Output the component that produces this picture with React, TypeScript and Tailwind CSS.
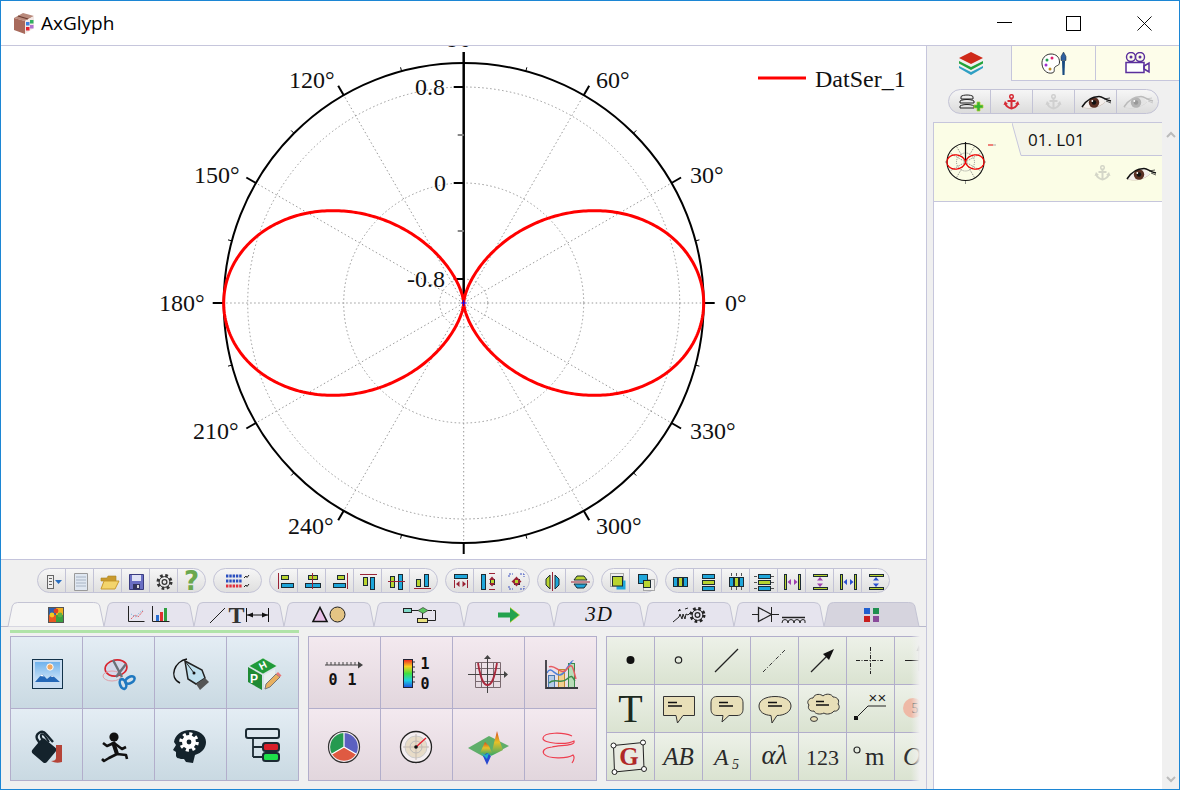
import { ReactNode } from 'react'

const CX = 463.7
const CY = 303
const R = 240

// r = 240 cos^2(t), same curve for the plot and the layer thumbnail
function lobes(cx: number, cy: number, rad: number) {
  const pts: string[] = []
  for (let i = 0; i <= 720; i++) {
    const t = (i / 720) * Math.PI * 2
    const r = rad * Math.cos(t) * Math.cos(t)
    pts.push(`${(cx + r * Math.cos(t)).toFixed(2)},${(cy - r * Math.sin(t)).toFixed(2)}`)
  }
  return 'M' + pts.join(' L') + 'Z'
}

const polar = (deg: number, r: number, cx = CX, cy = CY) => ({
  x: cx + r * Math.cos((deg * Math.PI) / 180),
  y: cy - r * Math.sin((deg * Math.PI) / 180),
})

const angleLabels = [
  { t: '120°', x: 289, y: 88 },
  { t: '60°', x: 596, y: 88 },
  { t: '150°', x: 194, y: 183 },
  { t: '30°', x: 690, y: 183 },
  { t: '180°', x: 159, y: 311 },
  { t: '0°', x: 725, y: 311 },
  { t: '210°', x: 193, y: 439 },
  { t: '330°', x: 690, y: 439 },
  { t: '240°', x: 288, y: 534 },
  { t: '300°', x: 596, y: 534 },
]

function PolarPlot() {
  const spokes = Array.from({ length: 12 }, (_, i) => i * 30)
  const minors = Array.from({ length: 12 }, (_, i) => i * 30 + 15)
  return (
    <svg width="925" height="513" viewBox="1 46 925 513" className="block" fontFamily="'Liberation Serif', serif">
      {spokes.map((a) => {
        const p = polar(a, R)
        return <line key={a} x1={CX} y1={CY} x2={p.x} y2={p.y} stroke="#999" strokeWidth="1" strokeDasharray="1.5 2.5" />
      })}
      {[24, 120, 216].map((r) => (
        <circle key={r} cx={CX} cy={CY} r={r} fill="none" stroke="#999" strokeWidth="1" strokeDasharray="1.5 2.5" />
      ))}
      <circle cx={CX} cy={CY} r={R} fill="none" stroke="#000" strokeWidth="2" />
      {spokes.filter((a) => a !== 90).map((a) => {
        const p = polar(a, R)
        const q = polar(a, R + 11)
        return <line key={a} x1={p.x} y1={p.y} x2={q.x} y2={q.y} stroke="#000" strokeWidth="2" />
      })}
      {minors.map((a) => {
        const p = polar(a, R)
        const q = polar(a, R + 4)
        return <line key={a} x1={p.x} y1={p.y} x2={q.x} y2={q.y} stroke="#000" strokeWidth="1" />
      })}
      <line x1={CX} y1={52} x2={CX} y2={CY} stroke="#000" strokeWidth="2.5" />
      {[87, 183, 279].map((y) => (
        <line key={y} x1={CX - 10} y1={y} x2={CX} y2={y} stroke="#000" strokeWidth="2" />
      ))}
      <line x1={CX - 6} y1={135} x2={CX} y2={135} stroke="#888" strokeWidth="2" />
      <line x1={CX - 6} y1={231} x2={CX} y2={231} stroke="#888" strokeWidth="2" />
      <path d={lobes(CX, CY, R)} fill="none" stroke="#f00" strokeWidth="3" />
      <path d={`M${CX - 3} ${CY}h6M${CX} ${CY - 3}v6`} stroke="#00f" strokeWidth="1" />
      <g fontSize="24" fill="#111">
        <text x="464" y="47" textAnchor="middle">90°</text>
        {angleLabels.map((l) => (
          <text key={l.t} x={l.x} y={l.y}>{l.t}</text>
        ))}
        <text x="445" y="95" textAnchor="end">0.8</text>
        <text x="446" y="191" textAnchor="end">0</text>
        <text x="445" y="287" textAnchor="end">-0.8</text>
        <text x="815" y="87">DatSer_1</text>
      </g>
      <line x1="758" y1="78" x2="806" y2="78" stroke="#f00" strokeWidth="3" />
    </svg>
  )
}

/* ---------- shared little drawings ---------- */

const LIME = '#b9d42f'
const BLUE = '#1ea6da'
const MAROON = '#9a2335'

function B({ x, y, w, h, f = LIME }: { x: number; y: number; w: number; h: number; f?: string }) {
  return <rect x={x + 0.5} y={y + 0.5} width={w} height={h} fill={f} stroke="#1c2b33" strokeWidth="1" />
}

function Ic({ children, w = 28, h = 24 }: { children: ReactNode; w?: number; h?: number }) {
  return (
    <svg width={w} height={h} viewBox={`0 0 ${w} ${h}`} className="shrink-0 overflow-visible">
      {children}
    </svg>
  )
}

function Arrows({ x, y, v, c }: { x: number; y: number; v?: boolean; c: string }) {
  return v ? (
    <path d={`M${x} ${y - 5}l-3 3.5h6zM${x} ${y + 5}l-3 -3.5h6z`} fill={c} />
  ) : (
    <path d={`M${x - 5} ${y}l3.5 -3v6zM${x + 5} ${y}l-3.5 -3v6z`} fill={c} />
  )
}

function Pill({ children }: { children: ReactNode[] }) {
  const single = children.length === 1
  return (
    <div className="flex h-[25px] rounded-full border border-[#c3c3d6] bg-linear-to-b from-[#f6f6f6] to-[#dfdfdf]">
      {children.map((c, i) => (
        <div
          key={i}
          className={
            single
              ? 'flex w-[47px] items-center justify-center'
              : i === 0
                ? 'flex w-[27px] items-center justify-center'
                : 'flex w-[28px] items-center justify-center border-l border-[#c3c3d6]'
          }
        >
          {c}
        </div>
      ))}
    </div>
  )
}

function Gear({ x, y, s = 1, c = '#333' }: { x: number; y: number; s?: number; c?: string }) {
  return (
    <g transform={`translate(${x} ${y}) scale(${s})`} fill="none" stroke={c}>
      <circle r="6.5" strokeWidth="3" strokeDasharray="2.6 2.5" />
      <circle r="5.4" strokeWidth="1" />
      <circle r="2.4" strokeWidth="1.2" />
    </g>
  )
}

/* ---------- top toolbar ---------- */

const toolbarGroups: ReactNode[][] = [
  [
    <Ic key="a">
      <rect x="9.5" y="6.5" width="6" height="13" fill="#eee" stroke="#666" />
      <path d="M11 9.5h3M11 12.5h3M11 15.5h3" stroke="#666" />
      <path d="M17 11h7l-3.5 4z" fill="#2a6fc0" />
    </Ic>,
    <Ic key="b">
      <path d="M8.5 4.5h13v17h-13z" fill="#dfe7f1" stroke="#9a9a9a" />
      <path d="M10 8h10M10 11h10M10 14h10M10 17h10" stroke="#a8b4c4" />
    </Ic>,
    <Ic key="c">
      <path d="M7 9h6l1 -2h8v5H7z" fill="#c99a2e" stroke="#a98322" strokeWidth=".6" />
      <path d="M7 20l3 -8h15l-4 8z" fill="#f3d46c" stroke="#c99a2e" />
    </Ic>,
    <Ic key="d">
      <path d="M7.5 5.5h14v15h-14z" fill="#6a6fc4" stroke="#3a3c80" />
      <rect x="10" y="6" width="9" height="6" fill="#dfe2f5" />
      <rect x="11" y="15" width="7" height="5.5" fill="#33355f" />
      <rect x="15" y="16" width="2" height="3" fill="#ddd" />
    </Ic>,
    <Ic key="e"><Gear x={14.5} y={13} /></Ic>,
    <span key="f" className="font-['DejaVu_Sans',sans-serif] text-[26px] leading-none font-bold text-[#6aa84f]">?</span>,
  ],
  [
    <Ic key="a" w={47}>
      {[0, 1, 2].map((r) =>
        [0, 1, 2, 3, 4].map((c) => (
          <rect key={`${r}${c}`} x={12 + c * 3.3} y={5.5 + r * 5} width="2.4" height="3" fill={r === 2 ? '#e0303e' : '#2a4fc0'} />
        )),
      )}
      <path d="M30 9l2 -2 1 1.500 2 -2.500M30 18l2 -2 1 1.500 2 -2.500" fill="none" stroke="#222" strokeWidth="1" />
    </Ic>,
  ],
  [
    <Ic key="a"><path d="M8.5 4v16" stroke={MAROON} /><B x={11} y={6} w={7} h={4} /><B x={11} y={14} w={12} h={4} f={BLUE} /></Ic>,
    <Ic key="b"><B x={10} y={6} w={9} h={4} /><B x={7} y={14} w={15} h={4} f={BLUE} /><path d="M14.5 4v16" stroke={MAROON} /></Ic>,
    <Ic key="c"><B x={11} y={6} w={7} h={4} /><B x={7} y={14} w={12} h={4} f={BLUE} /><path d="M21.5 4v16" stroke={MAROON} /></Ic>,
    <Ic key="d"><path d="M6 5.5h17" stroke={MAROON} /><B x={9} y={8} w={4} h={8} /><B x={16} y={8} w={4} h={12} f={BLUE} /></Ic>,
    <Ic key="e"><B x={8} y={7} w={4} h={11} /><B x={16} y={5} w={4} h={15} f={BLUE} /><path d="M6 12.5h17" stroke={MAROON} /></Ic>,
    <Ic key="f"><B x={6} y={10} w={4} h={7} /><B x={14} y={5} w={4} h={12} f={BLUE} /><path d="M4 19.5h17" stroke={MAROON} /></Ic>,
  ],
  [
    <Ic key="a"><B x={8} y={5} w={13} h={4} f={BLUE} /><path d="M8.5 11v8M21.5 11v8" stroke={MAROON} /><Arrows x={15} y={15} c={MAROON} /></Ic>,
    <Ic key="b"><B x={7} y={5} w={4} h={15} f={BLUE} /><B x={16} y={10} w={4} h={5} /><Arrows x={18} y={12.5} v c={MAROON} /><path d="M15 4.5h6M15 20.5h6" stroke={MAROON} /></Ic>,
    <Ic key="c">
      <path d="M7 8V5h4M18 5h4v3M7 17v3h4M18 20h4v-3" fill="none" stroke="#3a50c0" strokeDasharray="2 1" />
      <B x={12} y={10} w={5} h={5} />
      <Arrows x={14.5} y={12.5} c={MAROON} />
      <Arrows x={14.5} y={12.5} v c={MAROON} />
    </Ic>,
  ],
  [
    <Ic key="a">
      <path d="M12 6v14L8 16v-6z" fill={LIME} stroke="#1c2b33" />
      <path d="M17 6v14l4 -4v-6z" fill={BLUE} stroke="#1c2b33" />
      <path d="M14.5 3v19" stroke={MAROON} />
    </Ic>,
    <Ic key="b">
      <path d="M8 11h13l-3 -4h-7z" fill={LIME} stroke="#1c2b33" />
      <path d="M8 15h13l-3 4h-7z" fill={BLUE} stroke="#1c2b33" />
      <path d="M5 13h19" stroke={MAROON} />
    </Ic>,
  ],
  [
    <Ic key="a">
      <rect x="8.5" y="4.5" width="13" height="13" fill="#eee" stroke="#666" strokeDasharray="1 1" />
      <rect x="14.5" y="11.5" width="9" height="9" fill={BLUE} />
      <rect x="10.5" y="7.5" width="10" height="9.5" fill={LIME} stroke="#1c2b33" />
    </Ic>,
    <Ic key="b">
      <rect x="13.5" y="10.5" width="11" height="11" fill="#eee" stroke="#666" strokeDasharray="1 1" />
      <rect x="8.5" y="5.5" width="9" height="9" fill={BLUE} stroke="#1c2b33" />
      <rect x="13.5" y="11.5" width="7" height="7" fill={LIME} stroke="#1c2b33" />
    </Ic>,
  ],
  [
    <Ic key="a"><B x={7} y={8} w={4} h={9} f={BLUE} /><B x={12} y={8} w={4} h={9} /><B x={17} y={8} w={4} h={9} f={BLUE} /></Ic>,
    <Ic key="b"><B x={8} y={5} w={12} h={4} f={BLUE} /><B x={8} y={11} w={12} h={4} /><B x={8} y={17} w={12} h={4} f={BLUE} /></Ic>,
    <Ic key="c">
      <path d="M9.5 4v3M14.5 4v3M19.5 4v3M9.5 18v3M14.5 18v3M19.5 18v3" stroke="#555" />
      <B x={7} y={8} w={4} h={9} f={BLUE} /><B x={12} y={8} w={4} h={9} /><B x={17} y={8} w={4} h={9} f={BLUE} />
    </Ic>,
    <Ic key="d">
      <path d="M4 7.5h3M4 13.5h3M4 19.5h3M21 7.5h3M21 13.5h3M21 19.5h3" stroke="#555" />
      <B x={8} y={5} w={12} h={4} f={BLUE} /><B x={8} y={11} w={12} h={4} /><B x={8} y={17} w={12} h={4} f={BLUE} />
    </Ic>,
    <Ic key="e"><B x={6} y={5} w={2} h={15} /><B x={20} y={5} w={2} h={15} /><Arrows x={14.5} y={13} c="#a040b0" /></Ic>,
    <Ic key="f"><B x={7} y={5} w={14} h={2} /><B x={7} y={18} w={14} h={2} /><Arrows x={14} y={13} v c="#a040b0" /></Ic>,
    <Ic key="g"><B x={6} y={5} w={2} h={15} /><B x={20} y={5} w={2} h={15} /><Arrows x={14.5} y={13} c="#2a50d0" /></Ic>,
    <Ic key="h"><B x={7} y={5} w={14} h={2} /><B x={7} y={18} w={14} h={2} /><Arrows x={14} y={13} v c="#2a50d0" /></Ic>,
  ],
]

/* ---------- tab strip ---------- */

function Tab({ width, active, dark, children }: { width: string; active?: boolean; dark?: boolean; children: ReactNode }) {
  const fill = active ? '#f5f5f5' : dark ? '#d6d4de' : '#e6e4ee'
  return (
    <div className={`relative flex h-[25px] items-center justify-center ${width}`}>
      <svg className="absolute inset-0 h-full w-full overflow-visible" preserveAspectRatio="none" viewBox="0 0 90 25">
        <path
          d="M0 24.5 L4 4 Q5 0.5 9 0.5 L80 0.5 Q85 0.5 86 4 L90 24.5"
          fill={fill}
          stroke="#c4c4d4"
          strokeWidth="1"
          vectorEffect="non-scaling-stroke"
        />
      </svg>
      <div className="relative flex items-center justify-center">{children}</div>
    </div>
  )
}

const tabs: { width: string; active?: boolean; dark?: boolean; icon: ReactNode }[] = [
  {
    width: 'w-[96px]',
    active: true,
    icon: (
      <Ic w={16} h={16}>
        <rect width="8" height="8" fill="#2a5fb0" />
        <rect x="8" width="8" height="8" fill="#f0b020" />
        <rect y="8" width="8" height="8" fill="#e85820" />
        <rect x="8" y="8" width="8" height="8" fill="#3aa040" />
        <circle cx="8" cy="4" r="2.4" fill="#e04020" />
        <circle cx="4" cy="8" r="2.4" fill="#f0c820" />
        <circle cx="12" cy="8" r="2.4" fill="#60b040" />
        <rect x=".5" y=".5" width="15" height="15" fill="none" stroke="#555" />
      </Ic>
    ),
  },
  {
    width: 'w-[90px]',
    icon: (
      <Ic w={42} h={18}>
        <path d="M.5 0v15.5h16" fill="none" stroke="#222" />
        <path d="M3 13l4 -4 3 2 5 -6" fill="none" stroke="#e0606a" strokeDasharray="2 1" />
        <path d="M3 8l5 3 3 -4 4 -3" fill="none" stroke="#6ab0d8" strokeDasharray="1 1.5" />
        <path d="M24.5 0v15.5h17" fill="none" stroke="#222" />
        <rect x="28" y="9" width="3" height="6" fill="#2a6fd0" />
        <rect x="32" y="6" width="3" height="9" fill="#e03030" />
        <rect x="36" y="2" width="3" height="13" fill="#30a040" />
      </Ic>
    ),
  },
  {
    width: 'w-[90px]',
    icon: (
      <div className="flex items-center">
        <Ic w={18} h={18}><path d="M1 17L16 2" stroke="#222" strokeWidth="1" /></Ic>
        <span className="mx-[1px] font-['Liberation_Serif',serif] text-[24px] leading-[20px] font-bold text-[#333]">T</span>
        <Ic w={23} h={18}><path d="M.5 2v14M22.5 2v14M1 9h21" stroke="#111" /><path d="M1 9l6 -2.5v5zM22 9l-6 -2.5v5z" fill="#111" /></Ic>
      </div>
    ),
  },
  {
    width: 'w-[90px]',
    icon: (
      <Ic w={34} h={17}>
        <path d="M8 1.5L15 15.5H1z" fill="#e6bfe6" stroke="#111" strokeWidth="1.6" />
        <circle cx="25.5" cy="8.5" r="7.5" fill="#e4c484" stroke="#222" />
      </Ic>
    ),
  },
  {
    width: 'w-[90px]',
    icon: (
      <Ic w={33} h={15}>
        <rect x=".5" y="1.5" width="8" height="4" fill="#7fd8c8" stroke="#222" />
        <path d="M9 3.5h6M30 3.5h2.5v10H24M19.5 6v5" fill="none" stroke="#222" />
        <path d="M15 3.5l5 -3 5 3 -5 3z" fill="#5cc860" stroke="#222" strokeWidth=".6" />
        <path d="M25 3.5h4" stroke="#222" />
        <rect x="14.5" y="11.5" width="10" height="4" fill="#e8e080" stroke="#222" />
      </Ic>
    ),
  },
  {
    width: 'w-[90px]',
    icon: (
      <Ic w={22} h={16}>
        <path d="M0 5.5h12V.5L21.5 8 12 15.5v-5H0z" fill="#23a24d" />
        <path d="M12 .5L21.5 8 12 15.5" fill="none" stroke="#c8d820" strokeWidth=".7" />
      </Ic>
    ),
  },
  {
    width: 'w-[90px]',
    icon: <span className="font-['Liberation_Serif',serif] text-[21px] leading-none tracking-[1px] text-[#111] italic">3D</span>,
  },
  {
    width: 'w-[90px]',
    icon: (
      <Ic w={34} h={16}>
        <path d="M1 15l6 -5 1 -3 2 5 1 -5 2 5 1 -5 2 1 3 -3M8 2l-2 2 3 -1M16 1l-3 1" fill="none" stroke="#222" strokeWidth="1" />
        <Gear x={25.5} y={8} s={1} c="#222" />
      </Ic>
    ),
  },
  {
    width: 'w-[90px]',
    icon: (
      <Ic w={54} h={18}>
        <path d="M0 8.5h6M20 8.5h7M19.5 1v15" stroke="#222" />
        <path d="M6.5 1.5l13 7 -13 7z" fill="none" stroke="#222" strokeWidth="1.3" />
        <path d="M30 11.5h23" stroke="#222" strokeWidth="1.5" />
        <path d="M30 17q0 -3.5 3 -3.5t3 3.5q0 -3.5 3 -3.5t3 3.5q0 -3.5 3 -3.5t3 3.5q0 -3.5 3 -3.5t2 3.5" fill="none" stroke="#222" />
      </Ic>
    ),
  },
  {
    width: 'w-[95px]',
    dark: true,
    icon: (
      <Ic w={15} h={14}>
        <rect width="6" height="6" fill="#1f5fd0" />
        <rect x="9" width="6" height="6" fill="#1f8f50" />
        <rect y="8" width="6" height="6" fill="#c81e1e" />
        <rect x="9" y="8" width="6" height="6" fill="#8a4a9a" />
      </Ic>
    ),
  },
]

/* ---------- big palette cells ---------- */

const big = (n: ReactNode) => (
  <svg width="71" height="71" viewBox="0 0 71 71">{n}</svg>
)

const panelOne: ReactNode[] = [
  big(
    <>
      <defs>
        <linearGradient id="sky" x1="0" y1="0" x2="0" y2="1">
          <stop offset="0" stopColor="#6fb2ec" />
          <stop offset="1" stopColor="#d4e8f8" />
        </linearGradient>
      </defs>
      <rect x="21.5" y="22.5" width="30" height="29" fill="#c8ddf2" stroke="#12324a" />
      <rect x="24" y="25" width="25" height="20" fill="url(#sky)" />
      <circle cx="39" cy="30" r="3.2" fill="#f0a860" stroke="#fff" />
      <path d="M24 45l7 -8 5 5 5 -4 8 7z" fill="#2468b8" />
      <path d="M29 39l2 -2 2 2.5zM39.500 39.500l1.500 -1.500 2 2z" fill="#fff" />
    </>,
  ),
  big(
    <>
      <ellipse cx="33" cy="31" rx="11" ry="8" fill="#d4d8ea" stroke="#d8242e" strokeWidth="1.6" transform="rotate(-10 33 31)" />
      <ellipse cx="29" cy="39" rx="9" ry="5" fill="none" stroke="#e0a0a8" />
      <path d="M30 23l9 17M43 27L33 40" stroke="#6a7078" strokeWidth="2.4" />
      <ellipse cx="40" cy="47" rx="3" ry="5" fill="none" stroke="#1f78c0" strokeWidth="2.6" transform="rotate(-20 40 47)" />
      <ellipse cx="47" cy="43" rx="5" ry="3" fill="none" stroke="#1f78c0" strokeWidth="2.6" transform="rotate(-30 47 43)" />
    </>,
  ),
  big(
    <>
      <path d="M32 22C20 24 13 40 25 46" fill="none" stroke="#111" strokeWidth="1.5" />
      <path d="M30 24L47 33L50 41L41 47L33 42Z" fill="#bfe0ee" stroke="#222" strokeWidth="1.5" />
      <path d="M30 24L39 36" stroke="#222" />
      <circle cx="39" cy="36" r="1.5" fill="#111" />
      <path d="M50 41L54 45L45 53L41 47Z" fill="#555" />
    </>,
  ),
  big(
    <>
      <path d="M36 21L50 29L36 37L22 29Z" fill="#1f9a3a" stroke="#fff" strokeWidth=".5" />
      <path d="M21 30L35 38V53L21 45Z" fill="#1f8a34" />
      <path d="M37 38L48 32V41L37 52Z" fill="#e8f0f0" />
      <text x="36" y="32" fontSize="10" fontWeight="700" fill="#fff" textAnchor="middle" fontFamily="'Liberation Sans', sans-serif" transform="rotate(-28 36 29)">H</text>
      <text x="27" y="46" fontSize="12" fontWeight="700" fill="#fff" textAnchor="middle" fontFamily="'Liberation Sans', sans-serif">P</text>
      <path d="M38 52l1 -5 10 -10 4 3 -10 10z" fill="#e8b060" stroke="#777" />
      <path d="M49 37l4 3 1.500 -1.500 -3.500 -3.500z" fill="#e87878" />
    </>,
  ),
  big(
    <>
      <rect x="24" y="32" width="19" height="19" rx="3" fill="#14232c" transform="rotate(40 33 41)" />
      <path d="M30 36L26 30C24 25 31 20 35 25L42 33" fill="none" stroke="#14232c" strokeWidth="2.4" />
      <path d="M33 34L30 28C29 25 32 24 34 27L38 33" fill="none" stroke="#14232c" strokeWidth="2" />
      <path d="M45 36h6v17q-6 2 -11 -1q5 0 5 -3z" fill="#b54438" />
    </>,
  ),
  big(
    <>
      <circle cx="31" cy="28" r="4.600" fill="#111" />
      <path d="M30 33L34 45L43 46L44 50M34 45L26 49L21 52L19 50M31 34L24 37L20 34M31 34L39 40L43 38" fill="none" stroke="#111" strokeWidth="2.6" strokeLinejoin="round" />
      <path d="M30 33L34 45" stroke="#111" strokeWidth="4" />
    </>,
  ),
  big(
    <>
      <path d="M35 21C26 21 20 26 19 33L21 36L18 41L21 43L21 47C22 50 25 50 29 50L31 53L38 54L40 46C47 44 51 39 51 33C51 26 44 21 35 21Z" fill="#14232c" />
      <circle cx="34" cy="33" r="8" fill="none" stroke="#fff" strokeWidth="3.600" strokeDasharray="3 3.280" />
      <circle cx="34" cy="33" r="7" fill="#fff" />
      <circle cx="34" cy="33" r="2.400" fill="#14232c" />
    </>,
  ),
  big(
    <>
      <rect x="19" y="20" width="33" height="9" rx="2" fill="#dbe6ee" stroke="#1b2a33" strokeWidth="2" />
      <path d="M26 29v19M26 38h10M26 48h10" stroke="#1b2a33" strokeWidth="1.800" fill="none" />
      <rect x="36" y="34" width="16" height="8" rx="2.500" fill="#d81e2a" stroke="#1b2a33" strokeWidth="2" />
      <rect x="36" y="44" width="16" height="8" rx="2.500" fill="#1ee04a" stroke="#1b2a33" strokeWidth="2" />
    </>,
  ),
]

const panelTwo: ReactNode[] = [
  big(
    <>
      <path d="M16 28h35" stroke="#444" strokeWidth="1.200" />
      <path d="M49 24.500l5 3.500 -5 3.500z" fill="#444" />
      <path d="M18 25v3M22 25v3M26 25v3M30 25v3M34 25v3M38 25v3M42 25v3M46 25v3" stroke="#444" />
      <text x="24" y="48" fontSize="15" fontWeight="700" fill="#111" textAnchor="middle" fontFamily="'DejaVu Sans Mono', monospace">0</text>
      <text x="43" y="48" fontSize="15" fontWeight="700" fill="#111" textAnchor="middle" fontFamily="'DejaVu Sans Mono', monospace">1</text>
    </>,
  ),
  big(
    <>
      <defs>
        <linearGradient id="cbar" x1="0" y1="0" x2="0" y2="1">
          <stop offset="0" stopColor="#f02020" />
          <stop offset=".25" stopColor="#f8d020" />
          <stop offset=".5" stopColor="#40e040" />
          <stop offset=".75" stopColor="#20d0e0" />
          <stop offset="1" stopColor="#2050e0" />
        </linearGradient>
      </defs>
      <rect x="22.500" y="22.500" width="9" height="28" fill="url(#cbar)" stroke="#223" />
      <path d="M32 25h2M32 30h2M32 35h2M32 40h2M32 45h2" stroke="#333" />
      <text x="44" y="32" fontSize="15" fontWeight="700" fill="#111" textAnchor="middle" fontFamily="'DejaVu Sans Mono', monospace">1</text>
      <text x="44" y="52" fontSize="15" fontWeight="700" fill="#111" textAnchor="middle" fontFamily="'DejaVu Sans Mono', monospace">0</text>
    </>,
  ),
  big(
    <>
      <path d="M22.500 25.500h25v25h-25zM22.500 31.500h25M22.500 37.500h25M22.500 44.500h25M28.500 25.500v25M34.500 25.500v25M40.500 25.500v25" fill="none" stroke="#7a6a70" />
      <path d="M15 37.500h36M34.500 22v34" stroke="#444" />
      <path d="M51 34l4 3.500 -4 3.500zM31 22l3.500 -4 3.500 4z" fill="#444" />
      <path d="M25 26C28 44 31 48 34.500 48C38 48 41 44 44 26" fill="none" stroke="#a8283c" strokeWidth="1.800" />
    </>,
  ),
  big(
    <>
      <rect x="23.500" y="38.500" width="6" height="12" fill="#b4cce8" stroke="#4a78b0" />
      <rect x="33.500" y="32.500" width="6" height="18" fill="#f0d090" stroke="#c08a30" />
      <rect x="43.500" y="26.500" width="6" height="24" fill="#b8dcb8" stroke="#3a8a4a" />
      <path d="M22 36C27 26 32 46 40 34S48 24 48 24" fill="none" stroke="#5080d8" strokeWidth="1.500" />
      <path d="M24 30C30 26 36 40 42 32S48 32 51 42" fill="none" stroke="#e85a60" strokeWidth="1.500" />
      <path d="M24 46C30 40 36 48 42 42S48 42 50 44" fill="none" stroke="#3a8a4a" strokeWidth="1.500" />
      <path d="M21 23v28h32" fill="none" stroke="#3a3a40" strokeWidth="1.800" />
    </>,
  ),
  big(
    <>
      <circle cx="35" cy="38" r="15.500" fill="#f2eaf0" stroke="#333" strokeWidth="1.200" />
      <path d="M35 38V24A14 14 0 0 1 47 45Z" fill="#5b60c0" />
      <path d="M35 38L47 45A14 14 0 0 1 23 45Z" fill="#df5a42" />
      <path d="M35 38L23 45A14 14 0 0 1 35 24Z" fill="#259a50" />
      <path d="M35 38V24M35 38L47 45M35 38L23 45" stroke="#fff" strokeWidth="1.200" />
    </>,
  ),
  big(
    <>
      <circle cx="35" cy="38" r="15.500" fill="#f4eef0" stroke="#222" strokeWidth="1.300" />
      <circle cx="35" cy="38" r="11" fill="#e8dcc8" stroke="#ccc" />
      <circle cx="35" cy="38" r="6" fill="none" stroke="#bbb" />
      <path d="M22 38h26M35 25v26" stroke="#c4b8b0" />
      <path d="M35 38L45 29" stroke="#e82030" strokeWidth="1.300" />
      <circle cx="35" cy="38" r="1.800" fill="#111" />
    </>,
  ),
  big(
    <>
      <defs>
        <linearGradient id="peak" x1="0" y1="0" x2="0" y2="1">
          <stop offset="0" stopColor="#d84818" />
          <stop offset=".45" stopColor="#e8c028" />
          <stop offset="1" stopColor="#30a868" />
        </linearGradient>
      </defs>
      <path d="M15 39L36 27L56 37L33 49Z" fill="#5fae6a" />
      <path d="M38 47L41 34L44 22L47 33L50 41Z" fill="url(#peak)" />
      <path d="M27 44L32 33L36 37L40 46Z" fill="url(#peak)" />
      <path d="M30 47L34 44L38 47L34 56Z" fill="#2848d0" />
      <path d="M28 44L32 46L36 44L34 50Z" fill="#20b0c8" />
    </>,
  ),
  big(
    <path d="M47 27C38 23 19 23 18 29C17 35 42 36 49 32C51 37 35 36 27 38C19 39 17 42 19 45C23 50 42 50 48 46C50 48 49 51 47 54" fill="none" stroke="#ee3f50" strokeWidth="1.200" />,
  ),
]

const sm = (n: ReactNode) => (
  <svg width="47" height="47" viewBox="0 0 47 47">{n}</svg>
)

const serif = "'Liberation Serif', serif"

function Bubble({ d, lx }: { d: string; lx: number }) {
  return (
    <>
      <path d={d} fill="#e8dfb8" stroke="#333" strokeWidth="1" />
      <path d={`M${lx} 17.500h9M${lx} 21h14`} stroke="#111" strokeWidth="1.500" />
    </>
  )
}

const panelThree: ReactNode[] = [
  sm(<circle cx="23.500" cy="23" r="4" fill="#111" />),
  sm(<circle cx="23.500" cy="23" r="3.200" fill="none" stroke="#222" strokeWidth="1.200" />),
  sm(<path d="M12 35L35 12" stroke="#222" strokeWidth="1.200" />),
  sm(<path d="M12 35L35 12" stroke="#333" strokeDasharray="4 2 1 2" />),
  sm(<><path d="M12 35L30 17" stroke="#222" strokeWidth="1.300" /><path d="M35 12L24 17L30 23Z" fill="#111" /></>),
  sm(<path d="M9 23.500H36M23.500 10V37" stroke="#222" strokeDasharray="4 1.500 1 1.500" />),
  sm(<><path d="M10 23.500H24" stroke="#222" /><path d="M24 12V34" stroke="#aaa" /><path d="M24 8l-2.500 6h5z" fill="#999" /></>),

  sm(<text x="23.500" y="37" fontSize="40" fill="#1d2a1f" textAnchor="middle" fontFamily={serif}>T</text>),
  sm(<Bubble lx={13} d="M8.500 11.500H39.500V30.500H28L22.500 38L21 30.500H8.500Z" />),
  sm(<Bubble lx={16} d="M14 11.500H34C38 11.500 40 14 40 18V24C40 28 38 30.500 34 30.500H26L19 37L20 30.500H14C10 30.500 8 28 8 24V18C8 14 10 11.500 14 11.500Z" />),
  sm(<Bubble lx={17} d="M24 11.500C33 11.500 40 15 40 21C40 27 33 30.500 26 30.500L21 38L20 30.500C13 30 8 27 8 21C8 15 15 11.500 24 11.500Z" />),
  sm(
    <>
      <path d="M14 13C16 8 22 9 24 11C27 8 33 9 34 12C38 12 41 15 39 19C42 22 39 27 35 26C33 29 27 30 25 28C21 30 16 29 15 26C11 27 8 23 10 20C7 17 10 13 14 13Z" fill="#e8dfb8" stroke="#333" />
      <path d="M17 16.500h8M17 20h13" stroke="#111" strokeWidth="1.500" />
      <ellipse cx="15" cy="34" rx="3.500" ry="2.400" fill="#e8dfb8" stroke="#333" />
    </>,
  ),
  sm(
    <>
      <rect x="7" y="31" width="4" height="4" fill="#111" />
      <path d="M9 33L21 21H39" fill="none" stroke="#222" />
      <text x="26" y="18" fontSize="15" fill="#222" textAnchor="middle" fontFamily="'Liberation Sans', sans-serif">×</text>
      <text x="35" y="18" fontSize="15" fill="#222" textAnchor="middle" fontFamily="'Liberation Sans', sans-serif">×</text>
    </>,
  ),
  sm(
    <>
      <circle cx="18" cy="23" r="10" fill="#eeb9a6" />
      <text x="20" y="28" fontSize="14" fill="#666" textAnchor="middle" fontFamily={serif}>5</text>
    </>,
  ),

  sm(
    <>
      <path d="M6.500 12.500L36 9.500L37 36L7.500 39Z" fill="#e8ebe2" stroke="#222" />
      <text x="22" y="32" fontSize="25" fontWeight="700" fill="#b02828" textAnchor="middle" fontFamily={serif}>G</text>
      {[[6.500, 12.500], [36, 9.500], [37, 36], [7.500, 39]].map(([x, y]) => (
        <circle key={x} cx={x} cy={y} r="2.500" fill="#fff" stroke="#222" />
      ))}
    </>,
  ),
  sm(<text x="23.500" y="32" fontSize="25" fontStyle="italic" fill="#2a2a2a" textAnchor="middle" fontFamily={serif}>AB</text>),
  sm(<><text x="11" y="32" fontSize="24" fontStyle="italic" fill="#2a2a2a" fontFamily={serif}>A</text><text x="29" y="36" fontSize="14" fontStyle="italic" fill="#2a2a2a" fontFamily={serif}>5</text></>),
  sm(<text x="23.500" y="31" fontSize="27" fontStyle="italic" fill="#2a2a2a" textAnchor="middle" fontFamily={serif}>αλ</text>),
  sm(<text x="23.500" y="32" fontSize="22" fill="#2a2a2a" textAnchor="middle" fontFamily={serif}>123</text>),
  sm(
    <>
      <circle cx="10" cy="17" r="3" fill="none" stroke="#2a2a2a" strokeWidth="1.200" />
      <text x="18" y="32" fontSize="25" fill="#2a2a2a" fontFamily={serif}>m</text>
    </>,
  ),
  sm(<text x="8" y="32" fontSize="26" fontStyle="italic" fill="#333" fontFamily={serif}>O</text>),
]

/* ---------- right panel bits ---------- */

function Eye({ ghost, w = 32 }: { ghost?: boolean; w?: number }) {
  const line = ghost ? '#bbb' : '#111'
  const iris = ghost ? '#b4b4b4' : '#5a3024'
  return (
    <svg width={w} height="15" viewBox="0 0 32 15" className="shrink-0">
      <path d="M2 13C8 14.500 17 15 25 8" fill="#f0ece8" stroke={ghost ? '#ccc' : '#b8a090'} strokeWidth=".7" />
      <path d="M2 13C7 6 13 3 19 3C21 3 24 7 25 8C17 15 8 14.500 2 13Z" fill={ghost ? '#e4e4e4' : '#f4efec'} />
      <circle cx="14" cy="8.500" r="5.200" fill={iris} />
      <circle cx="14" cy="8.500" r="2.200" fill={ghost ? '#999' : '#111'} />
      <circle cx="12.300" cy="7" r=".9" fill="#fff" />
      <path d="M2 13C7 5 13 2.500 19 2.500C23 2.500 25 6 31 7" fill="none" stroke={line} strokeWidth="1.500" />
      <path d="M24 5L30 4M26 7L31 9" fill="none" stroke={line} strokeWidth=".7" />
    </svg>
  )
}

function AnchorIcon({ c }: { c: string }) {
  return (
    <svg width="17" height="16" viewBox="0 0 17 16" className="shrink-0">
      <circle cx="8.500" cy="2.500" r="1.800" fill="none" stroke={c} strokeWidth="1.500" />
      <path d="M8.500 4.500V14.500M4.500 7H12.500M2 9C3 12 6 14 8.500 14.500C11 14 14 12 15 9" fill="none" stroke={c} strokeWidth="2" />
      <path d="M.5 11L2 7L5 10ZM16.500 11L15 7L12 10Z" fill={c} />
    </svg>
  )
}

function RightTabs() {
  return (
    <div className="flex h-[35px] shrink-0">
      <div className="flex w-[84px] items-center justify-center pl-[3px]">
        <svg width="26" height="23" viewBox="0 0 26 23">
          <path d="M1 14l12 6 12 -6 0 2 -12 7 -12 -7z" fill="#2f9fc4" />
          <path d="M1 9l12 6 12 -6 0 2.500 -12 6.500 -12 -6.500z" fill="#23a23a" />
          <path d="M13 0L25 6L13 12L1 6Z" fill="#cf2a1a" />
        </svg>
      </div>
      <div className="flex w-[84px] items-center justify-center border-b border-l border-[#c6c6dc] bg-[#fdfdea]">
        <svg width="26" height="23" viewBox="0 0 26 23">
          <path d="M10 2C4 2 .5 7 1 12C1.500 18 6 22 11 21C15 20 12 17 14 15C16 13 18.500 14 18.500 10C18.500 5 15 2 10 2Z" fill="#fff" stroke="#333" strokeWidth="1" />
          <circle cx="11" cy="6" r="1.500" fill="#e0206a" />
          <circle cx="6" cy="8" r="1.500" fill="#20a050" />
          <circle cx="5" cy="13" r="1.500" fill="#a030d0" />
          <circle cx="9" cy="17" r="1.500" fill="#c09020" />
          <path d="M21 9h3l-.5 14h-2z" fill="#184a80" />
          <path d="M22.500 0L25 4.500V8.500H20V4.500Z" fill="#3060a0" stroke="#123" strokeWidth=".5" />
        </svg>
      </div>
      <div className="flex flex-1 items-center justify-center border-b border-l border-[#c6c6dc] bg-[#fdfdea]">
        <svg width="26" height="22" viewBox="0 0 26 22">
          <circle cx="6" cy="5" r="4.500" fill="none" stroke="#5a2f9c" strokeWidth="1.400" />
          <circle cx="15" cy="5" r="4.500" fill="none" stroke="#5a2f9c" strokeWidth="1.400" />
          <circle cx="6" cy="5" r="1.500" fill="#5a2f9c" />
          <circle cx="15" cy="5" r="1.500" fill="#5a2f9c" />
          <rect x="1" y="10.500" width="18" height="10" fill="#fff" stroke="#5a2f9c" strokeWidth="1.500" />
          <path d="M19 14l5 -3v9l-5 -3z" fill="none" stroke="#5a2f9c" strokeWidth="1.500" />
        </svg>
      </div>
    </div>
  )
}

function Thumb() {
  return (
    <svg width="53" height="48" viewBox="945 140 53 48" className="shrink-0">
      {[30, 60, 120, 150, 210, 240, 300, 330].map((a) => {
        const p = polar(a, 18.500, 965.500, 162)
        return <line key={a} x1="965.500" y1="162" x2={p.x} y2={p.y} stroke="#666" strokeWidth=".8" strokeDasharray="1 1" />
      })}
      <circle cx="965.500" cy="162" r="9" fill="none" stroke="#777" strokeWidth=".8" strokeDasharray="1 1" />
      <circle cx="965.500" cy="162" r="18.500" fill="none" stroke="#111" strokeWidth="1.100" />
      <path d="M965.500 142V162" stroke="#111" strokeWidth="1.200" />
      <path d="M945 162h3M983 162h3M965.500 181v3" stroke="#666" strokeWidth=".7" />
      <path d={lobes(965.500, 162, 18.500)} fill="none" stroke="#f00000" strokeWidth="1.300" />
      <path d="M988 145h5" stroke="#e83030" strokeWidth="1.200" />
      <path d="M993 145h3" stroke="#aaa" strokeWidth="1" />
    </svg>
  )
}

function LayerItem() {
  return (
    <div className="flex h-[79px] shrink-0 border-b border-[#c6c6dc] bg-[#fbfde6]">
      <div className="flex w-[78px] shrink-0 items-start pt-[17px] pl-[11px]">
        <Thumb />
      </div>
      <div className="flex flex-1 flex-col">
        <div className="relative flex h-[33px] items-center pl-[16px]">
          <svg className="absolute inset-0 h-full w-full" viewBox="0 0 150 33" preserveAspectRatio="none">
            <path d="M0 0L9 32.500H150V0Z" fill="#f4f5ea" />
            <path d="M0 0L9 32.500H150" fill="none" stroke="#c6c6dc" />
          </svg>
          <span className="relative font-['Open_Sans',sans-serif] text-[17px] leading-none text-[#111]">01. L01</span>
        </div>
        <div className="flex items-center justify-end gap-[14px] pt-[9px] pr-[5px]">
          <AnchorIcon c="#d4d6c8" />
          <Eye />
        </div>
      </div>
    </div>
  )
}

/* ---------- main ---------- */

export default function App() {
  return (
    <div className="flex h-[790px] w-[1180px] flex-col overflow-hidden border border-[#1c86d4] bg-white font-['Open_Sans',sans-serif]">
      {/* title bar */}
      <div className="flex h-[45px] shrink-0 items-center border-b border-[#c6c6dc] pl-[13px]">
        <svg width="21" height="21" viewBox="0 0 21 21" className="shrink-0">
          <path d="M0 5L9 0L20 3L11 8Z" fill="#b98a7c" />
          <path d="M0 5L11 8V21L0 17Z" fill="#a86a5c" />
          <path d="M11 8L20 3V15L11 21Z" fill="#f3e9e6" />
          <path d="M4 3L14 6" stroke="#6a3a30" strokeWidth="1.200" />
          <rect x="12" y="9" width="3.500" height="3.500" fill="#3a80e0" />
          <rect x="16" y="7" width="3.500" height="3.500" fill="#30b060" />
          <rect x="12" y="14" width="3.500" height="3.500" fill="#e02030" />
          <rect x="16" y="12" width="3.500" height="3.500" fill="#b070d0" />
        </svg>
        <span className="ml-[6px] text-[19px] leading-none text-black">AxGlyph</span>
        <div className="ml-auto flex h-full items-center pr-[27px]">
          <div className="flex w-[69px] justify-start pb-[1px]"><div className="h-px w-[15px] bg-black" /></div>
          <div className="flex w-[71px] justify-start"><div className="h-[15px] w-[15px] border border-black" /></div>
          <svg width="15" height="15" viewBox="0 0 16 16"><path d="M.5 .5L15.500 15.500M15.500 .5L.5 15.500" stroke="#000" strokeWidth="1" /></svg>
        </div>
      </div>

      <div className="flex min-h-0 flex-1">
        {/* left column */}
        <div className="flex w-[925px] shrink-0 flex-col">
          <div className="h-[513px] shrink-0 overflow-hidden bg-white">
            <PolarPlot />
          </div>
          <div className="flex flex-1 flex-col border-t border-[#c4c4dc] bg-[#f0f0f0]">
            <div className="flex gap-[7px] pt-[8px] pl-[36px]">
              {toolbarGroups.map((g, i) => (
                <Pill key={i}>{g}</Pill>
              ))}
            </div>
            <div className="mt-[9px] flex h-[25px] border-b border-[#b9b9cc] pl-[7px]">
              {tabs.map((t, i) => (
                <Tab key={i} width={t.width} active={t.active} dark={t.dark}>
                  {t.icon}
                </Tab>
              ))}
            </div>
            <div className="mt-[3px] ml-[9px] h-[3px] w-[289px] bg-[#b0e3a8]" />
            <div className="mt-[3px] flex gap-[9px] pl-[9px]">
              <div className="grid grid-cols-[repeat(4,71px)] gap-px border border-[#b2aecb] bg-[#b2aecb]">
                {panelOne.map((n, i) => (
                  <div key={i} className="h-[71px] bg-linear-to-b from-[#e4edf4] to-[#c9d9e2]">{n}</div>
                ))}
              </div>
              <div className="grid grid-cols-[repeat(4,71px)] gap-px border border-[#b2aecb] bg-[#b2aecb]">
                {panelTwo.map((n, i) => (
                  <div key={i} className="h-[71px] bg-linear-to-b from-[#f3e9ef] to-[#e2d6dd]">{n}</div>
                ))}
              </div>
              <div className="relative w-[314px] overflow-hidden">
                <div className="grid w-[337px] grid-cols-[repeat(7,47px)] gap-px border border-[#b2aecb] bg-[#b2aecb]">
                  {panelThree.map((n, i) => (
                    <div key={i} className="h-[47px] bg-linear-to-b from-[#edf1e8] to-[#dae3d1]">{n}</div>
                  ))}
                </div>
                <div className="absolute inset-y-0 right-0 w-[9px] bg-linear-to-r from-transparent to-[#f0f0f0]" />
              </div>
            </div>
          </div>
        </div>

        {/* right column */}
        <div className="flex flex-1 flex-col border-l border-[#c6c6dc] bg-[#f0f0f0]">
          <RightTabs />
          <div className="flex h-[41px] shrink-0 items-start pt-[8px] pl-[21px]">
            <div className="flex h-[25px] rounded-full border border-[#c3c3d6] bg-linear-to-b from-[#f6f6f6] to-[#dcdcdc]">
              <div className="flex w-[41px] items-center justify-center">
                <svg width="28" height="20" viewBox="0 0 28 20">
                  <path d="M5 4.500C7 2.500 15 2.500 17 4.500V7H5zM4 9C7 7 15 7 18 9V11H4zM4 14C7 12 15 12 18 14V16H4z" fill="none" stroke="#222" strokeWidth="1" />
                  <path d="M21 10h3v3h3v3h-3v3h-3v-3h-3v-3h3z" fill="#35b335" stroke="#b5d030" strokeWidth=".7" />
                </svg>
              </div>
              <div className="flex w-[42px] items-center justify-center border-l border-[#c3c3d6]"><AnchorIcon c="#d62c36" /></div>
              <div className="flex w-[42px] items-center justify-center border-l border-[#c3c3d6]"><AnchorIcon c="#d0d0d0" /></div>
              <div className="flex w-[42px] items-center justify-center border-l border-[#c3c3d6]"><Eye /></div>
              <div className="flex w-[42px] items-center justify-center border-l border-[#c3c3d6]"><Eye ghost /></div>
            </div>
          </div>
          <div className="flex min-h-0 flex-1 pl-[6px]">
            <div className="flex w-[229px] shrink-0 flex-col border-t border-l border-[#c6c6dc] bg-white">
              <LayerItem />
            </div>
            <div className="flex flex-1 flex-col items-center justify-between pt-[9px] pb-[6px]">
              <svg width="10" height="7" viewBox="0 0 10 7"><path d="M1 6L5 2L9 6" fill="none" stroke="#bbb" strokeWidth="2" /></svg>
              <svg width="10" height="7" viewBox="0 0 10 7"><path d="M1 1L5 5L9 1" fill="none" stroke="#bbb" strokeWidth="2" /></svg>
            </div>
          </div>
        </div>
      </div>
    </div>
  )
}
